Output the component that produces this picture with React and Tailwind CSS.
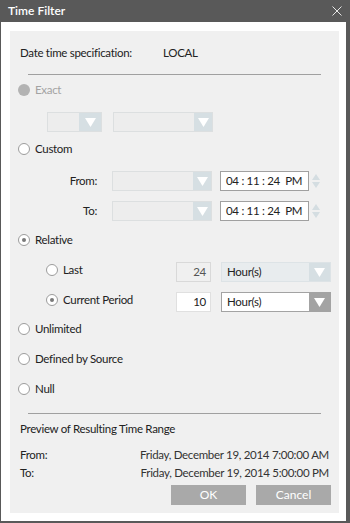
import React from 'react';

const font = { fontFamily: 'Lato, "Noto Sans", sans-serif' };

const Radio = ({ state }) => {
    if (state === 'disabled') {
        return <span className="w-[12px] h-[12px] rounded-full bg-[#b3b3b3] shrink-0" />;
    }
    return (
        <span className="w-[12px] h-[12px] rounded-full bg-white border border-[#9c9c9c] shrink-0 flex items-center justify-center">
            {state === 'checked' && <span className="w-[4px] h-[4px] rounded-full bg-[#7a7a7a]" />}
        </span>
    );
};

const Arrow = ({ color = '#ffffff' }) => (
    <svg width="11" height="9" viewBox="0 0 11 9"><path d="M0 0H11L5.5 9Z" fill={color} /></svg>
);

const Combo = ({ width, arrowW = 18, value, variant = 'disabled' }) => {
    const box = variant === 'active'
        ? 'bg-white border border-[#a3a3a3]'
        : variant === 'soft'
            ? 'bg-[#e8ecee] border border-[#dde3e6]'
            : 'bg-[#ededed] border border-[#dcdfe0]';
    const arrowBg = variant === 'active' ? 'bg-[#a3a3a3]' : 'bg-[#d6dfe3]';
    return (
        <div className={`h-[20px] flex ${box}`} style={{ width }}>
            <div className="flex-1 pl-[5px] flex items-center text-[#222]">{value}</div>
            <div className={`h-full flex items-center justify-center ${arrowBg}`} style={{ width: arrowW }}>
                <Arrow />
            </div>
        </div>
    );
};

const TimeBox = () => (
    <div className="flex items-center">
        <div className="w-[89px] h-[20px] bg-white border border-[#a0a0a0] flex items-center pl-[5px] text-[11.5px] text-[#222] whitespace-pre">
            04 : 11 : 24  PM
        </div>
        <div className="ml-[2px] flex flex-col gap-[2px] w-[9px] items-center">
            <svg width="8" height="6" viewBox="0 0 8 6"><path d="M0 6H8L4 0Z" fill="#d4dde1" /></svg>
            <svg width="8" height="6" viewBox="0 0 8 6"><path d="M0 0H8L4 6Z" fill="#d4dde1" /></svg>
        </div>
    </div>
);

const RadioRow = ({ state, label, className = '', disabled }) => (
    <div className={`h-[20px] flex items-center pl-[8px] ${className}`}>
        <Radio state={state} />
        <span className={`ml-[5px] ${disabled ? 'text-[#a3a3a3]' : 'text-[#222]'}`}>{label}</span>
    </div>
);

export default function App() {
    return (
        <div className="w-[350px] h-[523px] bg-[#595959] flex flex-col" style={font}>
            <div className="h-[22px] shrink-0 flex items-center justify-between pl-[8px] pr-[8px]">
                <span className="text-white text-[12px] font-semibold">Time Filter</span>
                <svg width="10" height="10" viewBox="0 0 10 10">
                    <path d="M0.5 0.5L9.5 9.5M9.5 0.5L0.5 9.5" stroke="#e6e6e6" strokeWidth="1" />
                </svg>
            </div>
            <div className="ml-[1px] w-[345px] h-[499px] bg-white pt-[9px] pl-[9px] pr-[7px]">
                <div className="w-[329px] h-[482px] bg-[#f0f0f0] flex flex-col text-[11.5px] tracking-[-0.3px] text-[#222]">
                    <div className="mt-[12px] h-[20px] flex items-center pl-[10px]">
                        <span className="w-[143px]">Date time specification:</span>
                        <span>LOCAL</span>
                    </div>
                    <div className="mt-[11px] mx-[18px] h-px bg-[#a0a0a0]" />
                    <RadioRow className="mt-[5px]" state="disabled" label="Exact" disabled />
                    <div className="mt-[12px] flex pl-[37px] gap-[11px]">
                        <Combo width={55} arrowW={22} />
                        <Combo width={100} />
                    </div>
                    <RadioRow className="mt-[7px]" state="off" label="Custom" />
                    <div className="mt-[12px] h-[20px] flex items-center">
                        <span className="w-[87px] text-right">From:</span>
                        <div className="ml-[15px]"><Combo width={100} /></div>
                        <div className="ml-[8px]"><TimeBox /></div>
                    </div>
                    <div className="mt-[10px] h-[20px] flex items-center">
                        <span className="w-[87px] text-right">To:</span>
                        <div className="ml-[15px]"><Combo width={100} /></div>
                        <div className="ml-[8px]"><TimeBox /></div>
                    </div>
                    <RadioRow className="mt-[9px]" state="checked" label="Relative" />
                    <div className="mt-[12px] h-[20px] flex items-start">
                        <div className="w-[166px] h-[15px] flex items-center pl-[36px]">
                            <Radio state="off" />
                            <span className="ml-[5px]">Last</span>
                        </div>
                        <div className="w-[35px] h-[20px] bg-[#f0f0f0] border border-[#d9d9d9] flex items-center justify-end pr-[4px] text-[#555]">24</div>
                        <div className="ml-[10px]"><Combo width={110} arrowW={21} value="Hour(s)" variant="soft" /></div>
                    </div>
                    <div className="mt-[10px] h-[20px] flex items-start">
                        <div className="w-[166px] h-[15px] flex items-center pl-[36px]">
                            <Radio state="checked" />
                            <span className="ml-[5px]">Current Period</span>
                        </div>
                        <div className="w-[35px] h-[20px] bg-white border border-[#e0e0e0] flex items-center justify-end pr-[4px]">10</div>
                        <div className="ml-[10px]"><Combo width={110} arrowW={21} value="Hour(s)" variant="active" /></div>
                    </div>
                    <RadioRow className="mt-[7px]" state="off" label="Unlimited" />
                    <RadioRow className="mt-[10px]" state="off" label="Defined by Source" />
                    <RadioRow className="mt-[10px]" state="off" label="Null" />
                    <div className="mt-[14px] mx-[18px] h-px bg-[#a0a0a0]" />
                    <div className="mt-[6px] h-[18px] flex items-center pl-[10px]">Preview of Resulting Time Range</div>
                    <div className="mt-[8px] h-[18px] flex items-center justify-between pl-[10px] pr-[10px]">
                        <span>From:</span>
                        <span className="text-[#333]">Friday, December 19, 2014 7:00:00 AM</span>
                    </div>
                    <div className="h-[18px] flex items-center justify-between pl-[10px] pr-[10px]">
                        <span>To:</span>
                        <span className="text-[#333]">Friday, December 19, 2014 5:00:00 PM</span>
                    </div>
                    <div className="mt-[3px] flex justify-end gap-[10px] pr-[8px]">
                        <button className="w-[75px] h-[20px] bg-[#a9a9a9] text-white text-[12px] tracking-normal">OK</button>
                        <button className="w-[75px] h-[20px] bg-[#a9a9a9] text-white text-[12px] tracking-normal">Cancel</button>
                    </div>
                </div>
            </div>
        </div>
    );
}
